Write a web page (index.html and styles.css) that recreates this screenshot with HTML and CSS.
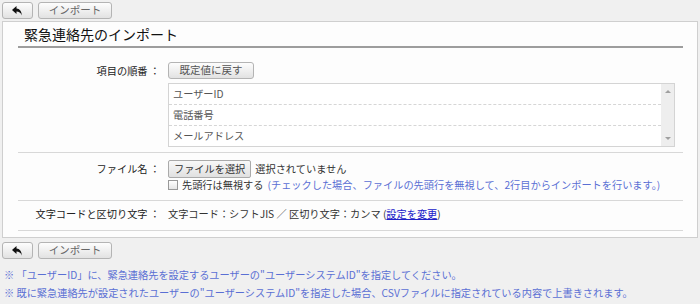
FILE: index.html
```html
<!DOCTYPE html>
<html lang="ja">
<head>
    <meta charset="UTF-8">
    <title>緊急連絡先のインポート</title>
    <link rel="stylesheet" href="styles.css">
</head>
<body>
    <div class="toolbar">
        <button class="btn btn-back" type="button">
            <svg width="11" height="10" viewBox="0 0 11 10"><path d="M4.5 0 L0 4 L4.5 8 V5.6 C7 5.6 8.6 6.6 9.8 9.6 C9.8 5.2 7.6 2.6 4.5 2.4 Z" fill="#111"/></svg>
        </button>
        <button class="btn btn-import" type="button">インポート</button>
    </div>

    <div class="panel">
        <h2 class="panel-title">緊急連絡先のインポート</h2>

        <div class="row row-order">
            <div class="label">項目の順番 ：</div>
            <div class="value">
                <button class="btn btn-default" type="button">既定値に戻す</button>
                <div class="listbox">
                    <ul class="items">
                        <li>ユーザーID</li>
                        <li>電話番号</li>
                        <li>メールアドレス</li>
                    </ul>
                    <div class="scroll">
                        <span class="arrow up"></span>
                        <span class="arrow down"></span>
                    </div>
                </div>
            </div>
        </div>

        <div class="row row-file">
            <div class="label">ファイル名 ：</div>
            <div class="value">
                <div class="file-line">
                    <span class="file-btn">ファイルを選択</span>
                    <span class="file-none">選択されていません</span>
                </div>
                <label class="check-line">
                    <span class="checkbox"></span>
                    <span>先頭行は無視する</span>
                    <span class="hint">(チェックした場合、ファイルの先頭行を無視して、2行目からインポートを行います。)</span>
                </label>
            </div>
        </div>

        <div class="row row-charset">
            <div class="label">文字コードと区切り文字 ：</div>
            <div class="value">文字コード：シフトJIS ／ 区切り文字：カンマ (<a href="#">設定を変更</a>)</div>
        </div>
    </div>

    <div class="toolbar toolbar-bottom">
        <button class="btn btn-back" type="button">
            <svg width="11" height="10" viewBox="0 0 11 10"><path d="M4.5 0 L0 4 L4.5 8 V5.6 C7 5.6 8.6 6.6 9.8 9.6 C9.8 5.2 7.6 2.6 4.5 2.4 Z" fill="#111"/></svg>
        </button>
        <button class="btn btn-import" type="button">インポート</button>
    </div>

    <ul class="notes">
        <li>※ 「ユーザーID」に、緊急連絡先を設定するユーザーの"ユーザーシステムID"を指定してください。</li>
        <li>※ 既に緊急連絡先が設定されたユーザーの"ユーザーシステムID"を指定した場合、CSVファイルに指定されている内容で上書きされます。</li>
    </ul>
</body>
</html>
```

FILE: styles.css
```css
body {
    font-family: 'Noto Sans CJK JP', 'DejaVu Sans', sans-serif;
    font-size: 10.2px;
    background-color: #f0f0f0;
    color: #333;
    margin: 0;
    padding: 0;
}
.toolbar {
    display: flex;
    gap: 5px;
    padding: 2px 2px 2px 2px;
}
.toolbar-bottom {
    padding: 4px 2px 0 2px;
}
.btn {
    font-family: inherit;
    font-size: 10.5px;
    color: #666;
    height: 17px;
    padding: 0;
    border: 1px solid #b4b4b4;
    border-radius: 3px;
    background: linear-gradient(#fdfdfd, #e2e2e2);
    display: flex;
    align-items: center;
    justify-content: center;
    line-height: 1;
}
.btn-back {
    width: 31px;
}
.btn-import {
    width: 74px;
}
.panel {
    margin: 0 2px;
    background-color: #fdfdfd;
    border: 1px solid #cfcfcf;
    padding: 0 14px 6px 15px;
}
.panel-title {
    font-size: 14px;
    font-weight: normal;
    color: #111;
    margin: 0;
    padding: 2px 0 2px 6px;
    line-height: 20px;
    border-bottom: 2px solid #9d9d9d;
}
.row {
    display: flex;
    border-bottom: 1px solid #d8d8d8;
}
.label {
    width: 142px;
    text-align: right;
    color: #222;
    flex-shrink: 0;
}
.value {
    margin-left: 8px;
    flex: 1;
}
.row-order {
    padding: 14px 0 5px 0;
}
.row-order .label {
    line-height: 17px;
}
.btn-default {
    width: 86px;
    color: #555;
}
.listbox {
    display: flex;
    margin-top: 4px;
    width: 505px;
    height: 62px;
    border: 1px solid #d4d4d4;
    background-color: #fff;
}
.items {
    flex: 1;
    list-style: none;
    margin: 0;
    padding: 0;
}
.items li {
    height: 20px;
    line-height: 20px;
    padding-left: 4px;
    color: #555;
    border-bottom: 1px dashed #d6d6d6;
}
.items li:last-child {
    border-bottom: none;
}
.scroll {
    width: 13px;
    background-color: #eeeeee;
    display: flex;
    flex-direction: column;
    justify-content: space-between;
    align-items: center;
    padding: 6px 0;
}
.arrow {
    width: 0;
    height: 0;
    border-left: 3px solid transparent;
    border-right: 3px solid transparent;
}
.arrow.up {
    border-bottom: 3px solid #a0a0a0;
}
.arrow.down {
    border-top: 3px solid #a0a0a0;
}
.row-file {
    padding: 7px 0 8px 0;
}
.row-file .label {
    line-height: 18px;
}
.file-line {
    display: flex;
    align-items: center;
    gap: 4px;
    line-height: 16px;
}
.file-btn {
    display: inline-block;
    height: 16px;
    line-height: 16px;
    padding: 0 5px;
    border: 1px solid #aaa;
    border-radius: 2px;
    background: linear-gradient(#f8f8f8, #e0e0e0);
    color: #333;
}
.file-none {
    color: #333;
}
.check-line {
    display: flex;
    align-items: center;
    gap: 4px;
    color: #333;
    line-height: 14px;
    white-space: nowrap;
}
.checkbox {
    width: 8px;
    height: 8px;
    border: 1px solid #999;
    background: linear-gradient(#fff, #e6e6e6);
}
.hint {
    color: #5a6fd4;
}
.row-charset {
    padding: 5px 0 8px 0;
    line-height: 16px;
}
.row-charset .value {
    color: #333;
}
.row-charset a {
    color: #2020c8;
}
.notes {
    list-style: none;
    margin: 7px 0 0 0;
    padding: 0 4px;
    color: #5a6fd4;
}
.notes li {
    line-height: 18px;
}
```
